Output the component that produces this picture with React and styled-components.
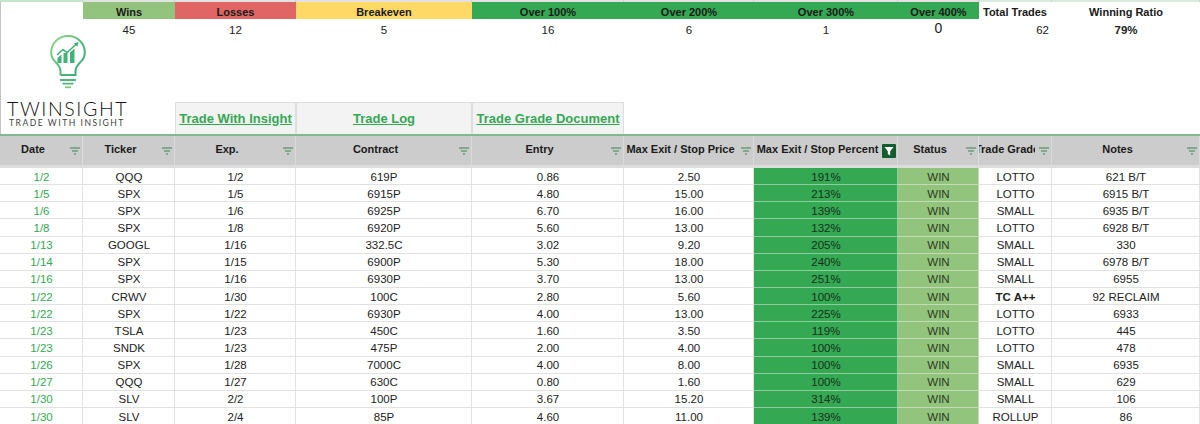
import styled, { createGlobalStyle } from 'styled-components';

const COLUMNS = '83px 92px 121px 176px 152px 130px 144px 81px 73px 148px';
const LINE = '#e2e2e2';

const strip = ['#c2e6cc', '#e2e2e2', '#e2e2e2', '#e2e2e2', '#e2e2e2', '#e2e2e2', '#e2e2e2', '#e2e2e2', '#d9ebde', '#d9ebde'];

const summary = [
  { label: 'Wins', value: '45', bg: '#93c47d' },
  { label: 'Losses', value: '12', bg: '#e06666' },
  { label: 'Breakeven', value: '5', bg: '#ffd966' },
  { label: 'Over 100%', value: '16', bg: '#34a853' },
  { label: 'Over 200%', value: '6', bg: '#34a853' },
  { label: 'Over 300%', value: '1', bg: '#34a853' },
  { label: 'Over 400%', value: '0', bg: '#34a853', big: true },
  { label: 'Total Trades', value: '62', left: true, right: true },
  { label: 'Winning Ratio', value: '79%', bold: true },
];

const links = [
  { label: 'Trade With Insight' },
  { label: 'Trade Log' },
  { label: 'Trade Grade Document' },
];

const headers = ['Date', 'Ticker', 'Exp.', 'Contract', 'Entry', 'Max Exit / Stop Price', 'Max Exit / Stop Percent', 'Status', 'Trade Grade', 'Notes'];

const rows = [
  ['1/2', 'QQQ', '1/2', '619P', '0.86', '2.50', '191%', 'WIN', 'LOTTO', '621 B/T'],
  ['1/5', 'SPX', '1/5', '6915P', '4.80', '15.00', '213%', 'WIN', 'LOTTO', '6915 B/T'],
  ['1/6', 'SPX', '1/6', '6925P', '6.70', '16.00', '139%', 'WIN', 'SMALL', '6935 B/T'],
  ['1/8', 'SPX', '1/8', '6920P', '5.60', '13.00', '132%', 'WIN', 'LOTTO', '6928 B/T'],
  ['1/13', 'GOOGL', '1/16', '332.5C', '3.02', '9.20', '205%', 'WIN', 'SMALL', '330'],
  ['1/14', 'SPX', '1/15', '6900P', '5.30', '18.00', '240%', 'WIN', 'SMALL', '6978 B/T'],
  ['1/16', 'SPX', '1/16', '6930P', '3.70', '13.00', '251%', 'WIN', 'SMALL', '6955'],
  ['1/22', 'CRWV', '1/30', '100C', '2.80', '5.60', '100%', 'WIN', 'TC A++', '92 RECLAIM'],
  ['1/22', 'SPX', '1/22', '6930P', '4.00', '13.00', '225%', 'WIN', 'LOTTO', '6933'],
  ['1/23', 'TSLA', '1/23', '450C', '1.60', '3.50', '119%', 'WIN', 'LOTTO', '445'],
  ['1/23', 'SNDK', '1/23', '475P', '2.00', '4.00', '100%', 'WIN', 'LOTTO', '478'],
  ['1/26', 'SPX', '1/28', '7000C', '4.00', '8.00', '100%', 'WIN', 'SMALL', '6935'],
  ['1/27', 'QQQ', '1/27', '630C', '0.80', '1.60', '100%', 'WIN', 'SMALL', '629'],
  ['1/30', 'SLV', '2/2', '100P', '3.67', '15.20', '314%', 'WIN', 'SMALL', '106'],
  ['1/30', 'SLV', '2/4', '85P', '4.60', '11.00', '139%', 'WIN', 'ROLLUP', '86'],
];

const GlobalStyle = createGlobalStyle`
  html, body {
    margin: 0;
    height: 424px;
    overflow: hidden;
    background: #fff;
  }
  body {
    font-family: "Liberation Sans", Arial, sans-serif;
    font-size: 11.5px;
    color: #222;
  }
`;

const Sheet = styled.div`
  width: 1200px;
  height: 424px;
  overflow: hidden;
`;

const Top = styled.section`
  display: grid;
  grid-template-columns: ${COLUMNS};
  grid-template-rows: 2px 17px 15px 68px 32px;
  border-bottom: 2px solid #7fb98f;
  box-shadow: inset 1px 0 0 #c4c4c4;
`;

const StripCell = styled.div`
  grid-row: 1;
  background: ${p => p.$bg};
  box-shadow: inset -1px 0 0 #cfcfcf;
`;

const SummaryLabel = styled.div`
  grid-row: 2;
  grid-column: ${p => p.$col};
  display: flex;
  align-items: center;
  justify-content: ${p => (p.$left ? 'flex-start' : 'center')};
  padding: 3px 0 0 ${p => (p.$left ? '4px' : '0')};
  background: ${p => p.$bg || 'transparent'};
  font-size: 11px;
  font-weight: 700;
  color: #1a1a1a;
`;

const SummaryValue = styled.div`
  grid-row: 3;
  grid-column: ${p => p.$col};
  display: flex;
  align-items: center;
  justify-content: ${p => (p.$right ? 'flex-end' : 'center')};
  padding-top: ${p => (p.$big ? '3px' : '7px')};
  padding-right: ${p => (p.$right ? '3px' : '0')};
  font-size: ${p => (p.$big ? '14px' : '11.5px')};
  font-weight: ${p => (p.$bold ? 700 : 400)};
`;

const Brand = styled.div`
  grid-row: 4 / 6;
  grid-column: 1 / 3;
  display: flex;
  flex-direction: column;
  align-items: flex-start;
  padding: 1px 0 0 7px;
`;

const BrandMark = styled.svg`
  width: 36px;
  height: 55px;
  margin-left: 43px;
`;

const BrandName = styled.div`
  font-family: "Lato", sans-serif;
  font-weight: 300;
  font-size: 19.5px;
  line-height: 16px;
  margin-top: 11px;
  letter-spacing: 1.6px;
  color: #111;
`;

const BrandTag = styled.div`
  font-family: "Lato", sans-serif;
  font-size: 8.6px;
  line-height: 9px;
  margin: 2px 0 0 2px;
  letter-spacing: 1.5px;
  color: #444;
`;

const LinkCell = styled.a`
  grid-row: 5;
  grid-column: ${p => p.$col};
  display: flex;
  align-items: center;
  justify-content: center;
  background: #f3f3f3;
  box-shadow: inset 1px 1px 0 #dedede, inset -1px 0 0 #dedede;
  color: #34a853;
  font-size: 13px;
  font-weight: 700;
  text-decoration: underline;
  white-space: nowrap;
  overflow: hidden;
`;

const HeaderRow = styled.div`
  display: grid;
  grid-template-columns: ${COLUMNS};
  height: 32px;
  background: #cccccc;
  border-bottom: 3px solid #dcdcdc;
  box-sizing: border-box;
`;

const HeaderCell = styled.div`
  display: flex;
  align-items: center;
  box-shadow: inset -1px 0 0 #dbdbdb;
  font-size: 11px;
  font-weight: 700;
  color: #1a1a1a;
  overflow: hidden;
`;

const HeaderLabel = styled.span`
  flex: 1;
  min-width: 0;
  padding-bottom: 3px;
  white-space: nowrap;
  overflow: hidden;
  display: flex;
  justify-content: center;
`;

const FilterSlot = styled.span`
  flex: 0 0 17px;
  display: flex;
  align-items: center;
  justify-content: flex-end;
  padding-right: 3px;
  box-sizing: border-box;
`;

const Body = styled.section`
  display: grid;
  grid-template-columns: ${COLUMNS};
  grid-auto-rows: 17.15px;
`;

const Cell = styled.div`
  display: flex;
  align-items: center;
  justify-content: center;
  overflow: hidden;
  white-space: nowrap;
  background: ${p => p.$bg || '#fff'};
  color: ${p => p.$color || '#222'};
  font-weight: ${p => (p.$bold ? 700 : 400)};
  box-shadow: inset -1px -1px 0 ${p => p.$line || LINE};
`;

const FilterLines = () => (
  <svg width="10" height="8" viewBox="0 0 10 8">
    <path d="M0 1h10M2 4h6M4 7h2" stroke="#3b8150" strokeWidth="1.1" fill="none" />
  </svg>
);

const ActiveFilter = () => (
  <svg width="14" height="14" viewBox="0 0 14 14" style={{ marginRight: -1, flexShrink: 0 }}>
    <rect width="14" height="14" rx="1" fill="#135c2c" />
    <path d="M2.5 3h9L8.2 7.2V11.5L5.8 10V7.2z" fill="#fff" />
  </svg>
);

const Logo = () => (
  <BrandMark viewBox="0 0 36 55">
    <defs>
      <linearGradient id="bulb" x1="0" y1="0" x2="1" y2="1">
        <stop offset="0" stopColor="#9ad888" />
        <stop offset="0.55" stopColor="#4fbb7c" />
        <stop offset="1" stopColor="#35a97a" />
      </linearGradient>
    </defs>
    <path
      d="M10.5 40V36C10.5 32.5 9 31 6.5 28C3 25 1.2 21.5 1.2 17.5C1.2 8.2 8.8 1 18 1C27.2 1 34.8 8.2 34.8 17.5C34.8 21.5 33 25 29.5 28C27 31 25.5 32.5 25.5 36V40H10.5"
      fill="none"
      stroke="url(#bulb)"
      strokeWidth="2"
    />
    <path d="M7 20L13 14.5L17 17.5L26.5 9" fill="none" stroke="#3fae72" strokeWidth="1.5" />
    <path d="M23.8 8.4L28.6 7L27.4 11.8z" fill="#3fae72" />
    <path d="M7.5 23l4-3.6V28H7.5zM13.5 18h4V28h-4zM20 17.5l4.5-4V28H20z" fill="#45b077" />
    <path d="M10 45h16M12.5 48.7h11" stroke="#4dba7c" strokeWidth="1.8" fill="none" />
    <path d="M15 52.3h6" stroke="#7fcb80" strokeWidth="1.8" fill="none" />
  </BrandMark>
);

function cellProps(col, value) {
  if (col === 0) return { $color: '#34a853' };
  if (col === 6) return { $bg: '#34a853', $color: '#14301a', $line: '#8fcb9f' };
  if (col === 7) return { $bg: '#93c47d', $color: '#2a3a22', $line: '#c3dcb6' };
  if (col === 8 && value === 'TC A++') return { $bold: true };
  return {};
}

export default function App() {
  return (
    <Sheet>
      <GlobalStyle />
      <Top>
        {strip.map((bg, i) => <StripCell key={i} $bg={bg} />)}
        {summary.map((s, i) => (
          <SummaryLabel key={s.label} $col={i + 2} $bg={s.bg} $left={s.left}>{s.label}</SummaryLabel>
        ))}
        {summary.map((s, i) => (
          <SummaryValue key={s.label} $col={i + 2} $big={s.big} $bold={s.bold} $right={s.right}>{s.value}</SummaryValue>
        ))}
        <Brand>
          <Logo />
          <BrandName>TWINSIGHT</BrandName>
          <BrandTag>TRADE WITH INSIGHT</BrandTag>
        </Brand>
        {links.map((l, i) => (
          <LinkCell key={l.label} href="#" $col={i + 3}>{l.label}</LinkCell>
        ))}
      </Top>
      <HeaderRow>
        {headers.map((h, i) => (
          <HeaderCell key={h}>
            <HeaderLabel>{h}</HeaderLabel>
            <FilterSlot>{i === 6 ? <ActiveFilter /> : <FilterLines />}</FilterSlot>
          </HeaderCell>
        ))}
      </HeaderRow>
      <Body>
        {rows.map((row, r) => row.map((value, c) => (
          <Cell key={`${r}-${c}`} {...cellProps(c, value)}>{value}</Cell>
        )))}
      </Body>
    </Sheet>
  );
}
